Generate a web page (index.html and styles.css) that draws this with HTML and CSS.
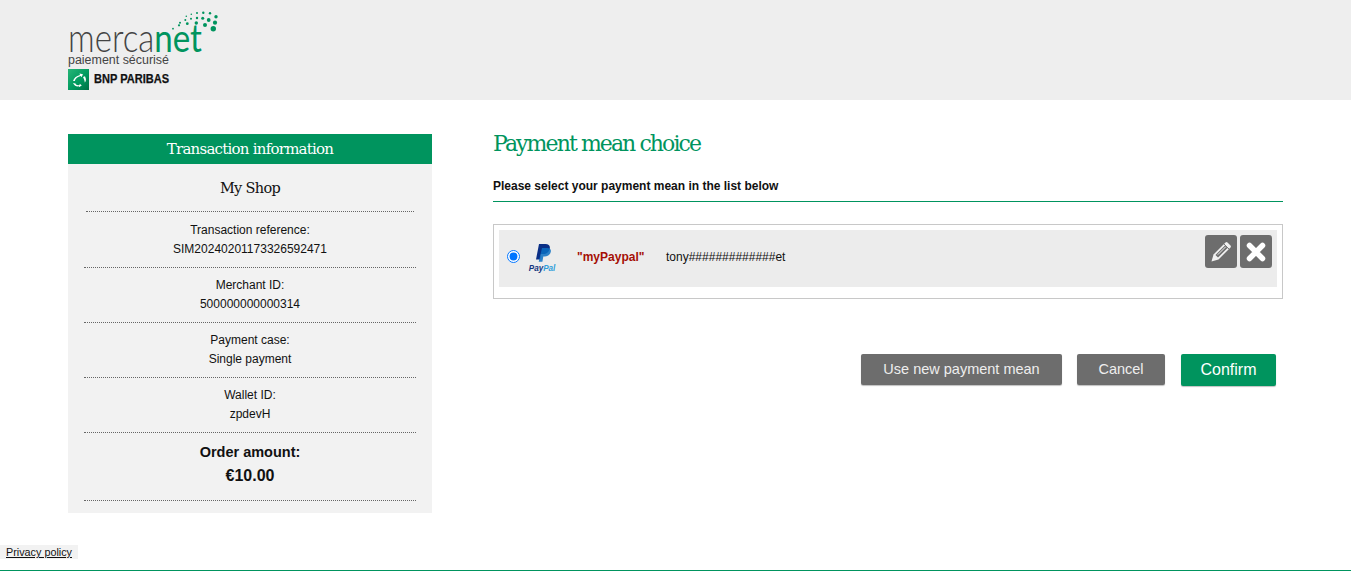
FILE: index.html
```html
<!DOCTYPE html>
<html lang="en">
<head>
<meta charset="utf-8">
<title>Mercanet</title>
<link rel="stylesheet" href="styles.css">
</head>
<body>
<header class="top">
  <svg class="logo" width="152" height="92" viewBox="0 0 152 92" aria-label="Mercanet">
    <defs>
      <linearGradient id="bnp" x1="0" y1="0" x2="1" y2="1">
        <stop offset="0" stop-color="#27b577"/>
        <stop offset=".55" stop-color="#009a5e"/>
        <stop offset="1" stop-color="#006f45"/>
      </linearGradient>
    </defs>
    <g fill="#00945e">
      <circle cx="145.300" cy="28.700" r="2.700"/><circle cx="147" cy="22.700" r="2.100"/><circle cx="148" cy="16.700" r="1.700"/><circle cx="142" cy="13.300" r="1.200"/><circle cx="135.300" cy="12.700" r="1.200"/><circle cx="129" cy="13" r="1"/><circle cx="123.300" cy="14.300" r=".8"/><circle cx="140.700" cy="20" r="1.900"/><circle cx="137" cy="25" r="2"/><circle cx="134.700" cy="18.300" r="1.500"/><circle cx="128.300" cy="23" r="1.700"/><circle cx="129" cy="18" r="1.200"/><circle cx="123" cy="18.700" r="1"/><circle cx="119.300" cy="23.700" r="1.400"/><circle cx="117.300" cy="20" r="1"/><circle cx="118.300" cy="16.300" r=".8"/><circle cx="112" cy="22.700" r="1"/><circle cx="111" cy="25.300" r="1.100"/><circle cx="105" cy="28.700" r=".9"/>
    </g>
    <text class="logo-word" x="0" y="52" textLength="134" lengthAdjust="spacingAndGlyphs"><tspan class="logo-merca">merca</tspan><tspan class="logo-net">net</tspan></text>
    <text class="logo-sub" x="0" y="64" textLength="101" lengthAdjust="spacingAndGlyphs">paiement sécurisé</text>
    <rect x="0" y="69" width="21" height="21" fill="url(#bnp)"/>
    <path transform="translate(0 69)" d="M5 12c1-3 3-5 7-6l-.5-1.500 3.500.8-1.500 3-.7-1.300c-3 .8-5.500 2.500-6 5zM5 14l2.500.5c.5 1.500 2 2 4 1.500l.3-1.200 2 1.800-3 1.700.2-1c-3 .5-5-1-6-3.300zM15 8l2-.8.8 2.300c.3 1.500 0 3-1 4-.2-2-.8-3.500-1.800-5.500z" fill="#fff"/>
    <text class="logo-bnp" x="26" y="83" textLength="75" lengthAdjust="spacingAndGlyphs">BNP PARIBAS</text>
  </svg>
</header>

<main class="content">
  <aside class="info">
    <h2 class="info-title">Transaction information</h2>
    <div class="info-body">
      <h3 class="shop">My Shop</h3>
      <div class="row row-first"><p>Transaction reference:</p><p>SIM20240201173326592471</p></div>
      <div class="row"><p>Merchant ID:</p><p>500000000000314</p></div>
      <div class="row"><p>Payment case:</p><p>Single payment</p></div>
      <div class="row"><p>Wallet ID:</p><p>zpdevH</p></div>
      <div class="amount"><p class="amount-label">Order amount:</p><p class="amount-value">€10.00</p></div>
    </div>
  </aside>

  <section class="choice">
    <h1 class="choice-title">Payment mean choice</h1>
    <p class="choice-sub">Please select your payment mean in the list below</p>
    <div class="list">
      <div class="item">
        <input class="radio" type="radio" name="mean" checked>
        <svg class="paypal" width="32" height="32" viewBox="0 0 32 32" aria-label="PayPal">
          <path d="M12 3h6.500c3.200 0 4.800 1.800 4.300 4.500-.6 3.500-3.200 5.500-6.500 5.500h-2.300l-1 5.500H9z" fill="#0a2f86"/>
          <path d="M15 7h5.500c2.500 0 3.800 1.500 3.300 3.800-.6 3-3 4.700-6 4.700h-1.500l-.9 5.200h-3.700z" fill="#0a6fc2" opacity=".85"/>
          <text class="pp" x="1.800" y="30" textLength="26.500" lengthAdjust="spacingAndGlyphs"><tspan class="pp-pay">Pay</tspan><tspan class="pp-pal">Pal</tspan></text>
        </svg>
        <span class="alias">"myPaypal"</span>
        <span class="account">tony#############et</span>
        <div class="actions">
          <button class="icon-btn" type="button" aria-label="Edit">
            <svg width="22" height="22" viewBox="0 0 22 22"><path d="M1.500 20.500l2-7L15.500 1.500a1.500 1.500 0 0 1 2 0l3 3a1.500 1.500 0 0 1 0 2L8.500 18.500z" fill="#f0f0f0"/><path d="M5.500 14l9.500-9.500 2.500 2.500L8 16.500z" fill="#6d6d6d"/><path d="M7.800 13.700l8-8" stroke="#f0f0f0" stroke-width="1" fill="none"/><path d="M13.800 2.900l5.300 5.300" stroke="#6d6d6d" stroke-width="1" fill="none"/></svg>
          </button>
          <button class="icon-btn" type="button" aria-label="Delete">
            <svg width="22" height="22" viewBox="0 0 22 22"><path d="M4.500 4.500l13 13M17.500 4.500l-13 13" stroke="#fff" stroke-width="5.500" stroke-linecap="round" fill="none"/></svg>
          </button>
        </div>
      </div>
    </div>
    <div class="buttons">
      <button class="btn btn-grey btn-new" type="button">Use new payment mean</button>
      <button class="btn btn-grey btn-cancel" type="button">Cancel</button>
      <button class="btn btn-green" type="button">Confirm</button>
    </div>
  </section>
</main>

<footer class="foot">
  <a class="privacy" href="#">Privacy policy</a>
</footer>
</body>
</html>
```
FILE: styles.css
```css
* { box-sizing: border-box; }
html, body { margin: 0; padding: 0; }
body {
  width: 1351px;
  height: 571px;
  overflow: hidden;
  background: #fff;
  color: #111;
  font-family: "Liberation Sans", Arial, sans-serif;
  font-size: 12px;
  display: flex;
  flex-direction: column;
}
p, h1, h2, h3 { margin: 0; }

.top { height: 100px; background: #eeeeee; padding-left: 68px; flex: none; }
.logo { display: block; }
.logo-word { font-family: Lato, sans-serif; font-size: 39px; }
.logo-merca { font-weight: 300; fill: #444; }
.logo-net { font-weight: 400; fill: #00945e; }
.logo-sub { font-family: "Liberation Sans", sans-serif; font-size: 12px; fill: #444; }
.logo-bnp { font-family: "Liberation Sans", sans-serif; font-weight: 700; font-size: 12px; fill: #111; stroke: #111; stroke-width: .25px; }

.content { display: flex; padding: 34px 0 0 68px; flex: none; height: 413px; }

.info { width: 364px; height: 379px; background: #f2f2f2; }
.info-title {
  height: 30px;
  background: #00945e;
  color: #fff;
  font-family: "DejaVu Serif", serif;
  font-weight: 400;
  font-size: 15px;
  letter-spacing: -.76px;
  line-height: 30px;
  text-align: center;
}
.info-body { padding: 0 16px; text-align: center; }
.shop {
  font-family: "DejaVu Serif", serif;
  font-weight: 400;
  font-size: 14.500px;
  letter-spacing: -.7px;
  line-height: 20px;
  padding: 14px 0 13px;
  margin: 0 2px;
  height: 48px;
  border-bottom: 1px dotted #666;
}
.row { height: 55px; padding-top: 8px; border-bottom: 1px dotted #666; }
.row-first { height: 56px; padding-top: 9px; }
.row p { line-height: 19px; height: 19px; }
.amount { height: 68px; padding-top: 9px; border-bottom: 1px dotted #666; }
.amount-label { font-size: 14.500px; font-weight: 700; line-height: 20px; }
.amount-value { font-size: 16px; font-weight: 700; line-height: 20px; margin-top: 4px; }

.choice { width: 790px; margin-left: 61px; }
.choice-title {
  font-family: "DejaVu Serif", serif;
  font-weight: 400;
  font-size: 22px;
  letter-spacing: -1.92px;
  color: #00945e;
  line-height: 28px;
  margin-top: -4px;
}
.choice-sub {
  font-weight: 700;
  line-height: 16px;
  padding: 20px 0 7px;
  height: 44px;
  border-bottom: 1px solid #00945e;
}
.list { margin-top: 22px; height: 75px; border: 1px solid #c8c8c8; padding: 5px; }
.item { height: 57px; background: #ececec; display: flex; align-items: center; position: relative; padding-bottom: 4px; }
.radio { margin: 0 0 0 8px; width: 13px; height: 13px; flex: none; accent-color: #0075ff; }
.paypal { margin-left: 7px; flex: none; }
.pp { font-family: "Liberation Sans", sans-serif; font-size: 9.500px; font-weight: 700; font-style: italic; }
.pp-pay { fill: #12357f; }
.pp-pal { fill: #2f9fdb; }
.alias { margin-left: 18px; width: 89px; font-weight: 700; color: #a50f05; flex: none; }
.account { flex: none; }
.actions { position: absolute; top: 5px; right: 5px; display: flex; gap: 3px; }
.icon-btn {
  width: 32px;
  height: 33px;
  padding: 0;
  border: 0;
  border-radius: 3px;
  background: #6d6d6d;
  display: flex;
  align-items: center;
  justify-content: center;
}

.buttons { display: flex; justify-content: flex-end; align-items: flex-start; margin-top: 55px; padding-right: 7px; }
.btn {
  border: 0;
  border-radius: 2px;
  color: #eee;
  font-family: "Liberation Sans", sans-serif;
  font-size: 14.500px;
  padding: 0 0 2px;
  height: 31px;
  box-shadow: 0 1px 1px rgba(0,0,0,.25);
}
.btn-grey { background: #6d6d6d; }
.btn-new { width: 201px; }
.btn-cancel { width: 88px; margin-left: 15px; }
.btn-green { background: #00945e; color: #fff; width: 95px; height: 32px; margin-left: 16px; font-size: 16px; padding: 0; }

.foot { flex: 1; border-bottom: 1px solid #00945e; padding-top: 32px; }
.privacy {
  display: block;
  width: 78px;
  height: 14px;
  background: #f2f2f2;
  color: #111;
  font-size: 10.800px;
  line-height: 14px;
  padding-left: 6px;
}
```
